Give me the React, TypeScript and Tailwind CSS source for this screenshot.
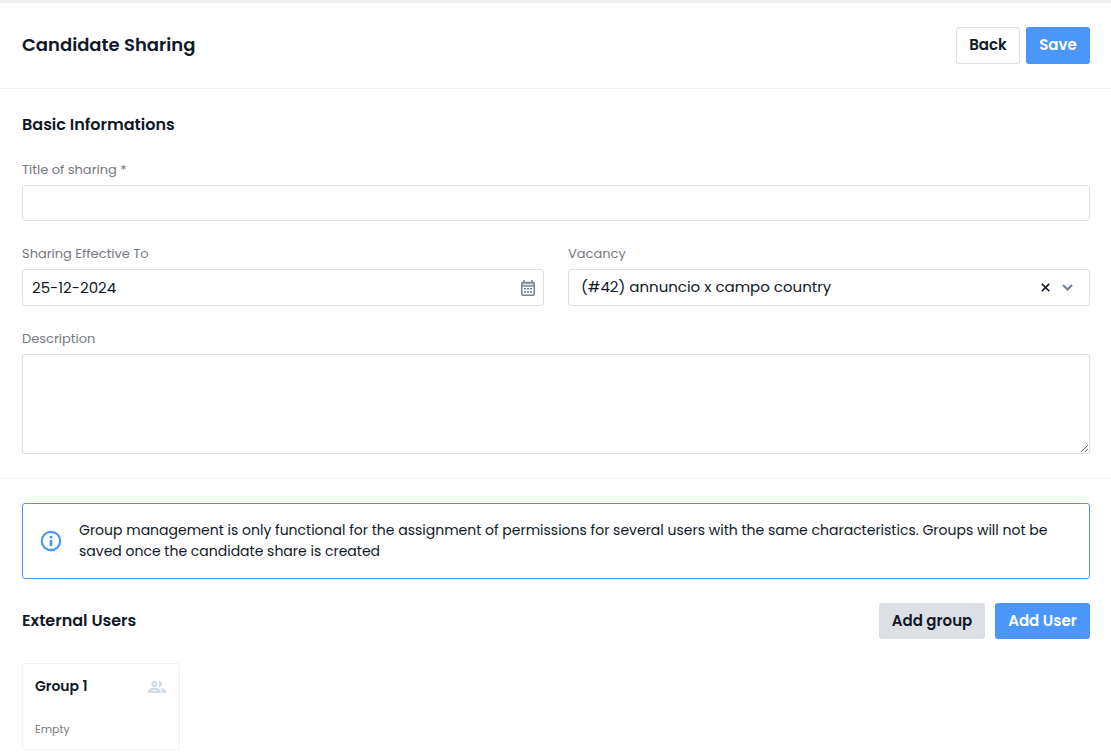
import type { ReactNode } from "react"

const fieldClass =
  "block w-full rounded-[3px] border border-[#dedfe3] bg-white px-[9px] text-[15px] text-[#101828] outline-none focus:border-[#4a97f9]"

function Field({
  id,
  label,
  children,
}: {
  id: string
  label: string
  children: ReactNode
}) {
  return (
    <div>
      <label htmlFor={id} className="block mb-[5px] text-[13px] leading-5 text-[#75797f]">
        {label}
      </label>
      {children}
    </div>
  )
}

function CalendarIcon() {
  return (
    <svg width="14" height="16" viewBox="0 0 14 16" fill="none" aria-hidden="true">
      <rect x=".75" y="2.5" width="12.5" height="12.75" rx="1.25" stroke="#748092" strokeWidth="1.5" />
      <path d="M1 3h12v1.5H1z" fill="#748092" opacity=".55" />
      <path d="M3 0v3M11 0v3M1 6h12" stroke="#748092" strokeWidth="1.5" />
      <path
        d="M3 8h2v1.6H3zM6 8h2v1.6H6zM9 8h2v1.6H9zM3 11h2v1.6H3zM6 11h2v1.6H6zM9 11h2v1.6H9z"
        fill="#748092"
      />
    </svg>
  )
}

function InfoIcon() {
  return (
    <svg width="24" height="24" viewBox="0 0 24 24" fill="none" className="shrink-0 text-[#4a97f9]" aria-hidden="true">
      <circle cx="12" cy="12" r="9.2" stroke="currentColor" strokeWidth="2.2" />
      <path d="M10.7 7h2.6v2.4h-2.6zM10.7 11h2.6v6h-2.6z" fill="currentColor" />
    </svg>
  )
}

function PeopleIcon() {
  return (
    <svg width="18" height="12" viewBox="0 0 18 12" fill="none" className="text-[#d0d9e6]" aria-hidden="true">
      <circle cx="6.5" cy="3" r="2" stroke="currentColor" strokeWidth="2.1" />
      <path d="M10 .1a3.100 3.100 0 1 1 0 5.900 4.600 4.600 0 0 0 0-5.900z" fill="currentColor" />
      <path
        fillRule="evenodd"
        clipRule="evenodd"
        d="M6.200 6.800C3.600 6.800 0 7.900 0 10v2h12.600v-2c0-2.100-3.600-3.200-6.400-3.200zM3.200 10c.7-.5 1.800-.9 3-.9s2.300.4 3 .9z"
        fill="currentColor"
      />
      <path d="M12.200 7c1.100.7 1.600 1.700 1.600 3v2H18v-2c0-1.700-3-2.800-5.800-3z" fill="currentColor" />
    </svg>
  )
}

export default function App() {
  return (
    <main className="bg-white border-t-3 border-[#eff0f2] font-['Poppins','Inter',sans-serif] text-[#101828]">
      <header className="flex justify-between items-center py-6 pr-[21px] pl-[22px] border-b border-[#eff0f2]">
        <h1 className="pb-0.5 text-lg font-semibold">Candidate Sharing</h1>
        <div className="flex gap-1.5">
          <button type="button" className="w-16 h-[37px] text-[15px] font-semibold rounded-[3px] border border-[#dedfe3]">
            Back
          </button>
          <button type="submit" form="sharing" className="w-16 h-[37px] text-[15px] font-semibold text-white rounded-[3px] bg-[#4a97f9]">
            Save
          </button>
        </div>
      </header>

      <form id="sharing" className="pt-6 pr-[21px] pb-6 pl-[22px] border-b border-[#eff0f2]">
        <h2 className="mb-[23px] text-base font-semibold">Basic Informations</h2>

        <div className="flex flex-col gap-[23px]">
          <Field id="title" label="Title of sharing *">
            <input id="title" type="text" className={`${fieldClass} h-9`} />
          </Field>

          <div className="grid grid-cols-2 gap-6">
            <Field id="effective-to" label="Sharing Effective To">
              <div className="relative">
                <input id="effective-to" type="text" defaultValue="25-12-2024" className={`${fieldClass} h-[37px]`} />
                <span className="absolute inset-y-0 right-[9px] flex items-center pointer-events-none">
                  <CalendarIcon />
                </span>
              </div>
            </Field>

            <Field id="vacancy" label="Vacancy">
              <div className="relative">
                <select id="vacancy" className={`${fieldClass} h-[37px] pl-3 pr-16 appearance-none`}>
                  <option>(#42) annuncio x campo country</option>
                </select>
                <div className="absolute inset-y-0 right-[17px] flex gap-3 items-center pointer-events-none">
                  <button type="button" aria-label="Clear vacancy" className="pointer-events-auto">
                    <svg width="9" height="9" viewBox="0 0 9 9" fill="none">
                      <path d="M.75.75l7.5 7.5M8.25.75l-7.5 7.5" stroke="#101828" strokeWidth="1.7" />
                    </svg>
                  </button>
                  <svg width="11" height="7" viewBox="0 0 11 7" fill="none" aria-hidden="true">
                    <path d="M1 1l4.5 4.5L10 1" stroke="#748092" strokeWidth="2" />
                  </svg>
                </div>
              </div>
            </Field>
          </div>

          <Field id="description" label="Description">
            <textarea id="description" className={`${fieldClass} h-[100px] py-2 resize-y`} />
          </Field>
        </div>
      </form>

      <section className="pt-6 pr-[21px] pb-1.5 pl-[22px]">
        <div className="flex gap-4 items-center p-4 mb-6 rounded-[3px] border border-[#4a97f9]">
          <InfoIcon />
          <p className="text-sm leading-[21px]">
            Group management is only functional for the assignment of permissions for several users with the same characteristics. Groups will not be saved once the candidate share is created
          </p>
        </div>

        <div className="flex justify-between items-center mb-6">
          <h2 className="text-base font-semibold">External Users</h2>
          <div className="flex gap-2.5">
            <button type="button" className="w-[106px] h-9 text-[15px] font-semibold rounded-[3px] bg-[#dce0e5]">
              Add group
            </button>
            <button type="button" className="w-[95px] h-9 text-[15px] font-semibold text-white rounded-[3px] bg-[#4a97f9]">
              Add User
            </button>
          </div>
        </div>

        <article className="w-[158px] p-3 rounded-[3px] border border-[#eff0f2]">
          <div className="flex justify-between items-center pr-px mb-6">
            <h3 className="text-sm leading-[21px] font-semibold">Group 1</h3>
            <PeopleIcon />
          </div>
          <p className="text-[11px] leading-4 text-[#75797f]">Empty</p>
        </article>
      </section>
    </main>
  )
}
